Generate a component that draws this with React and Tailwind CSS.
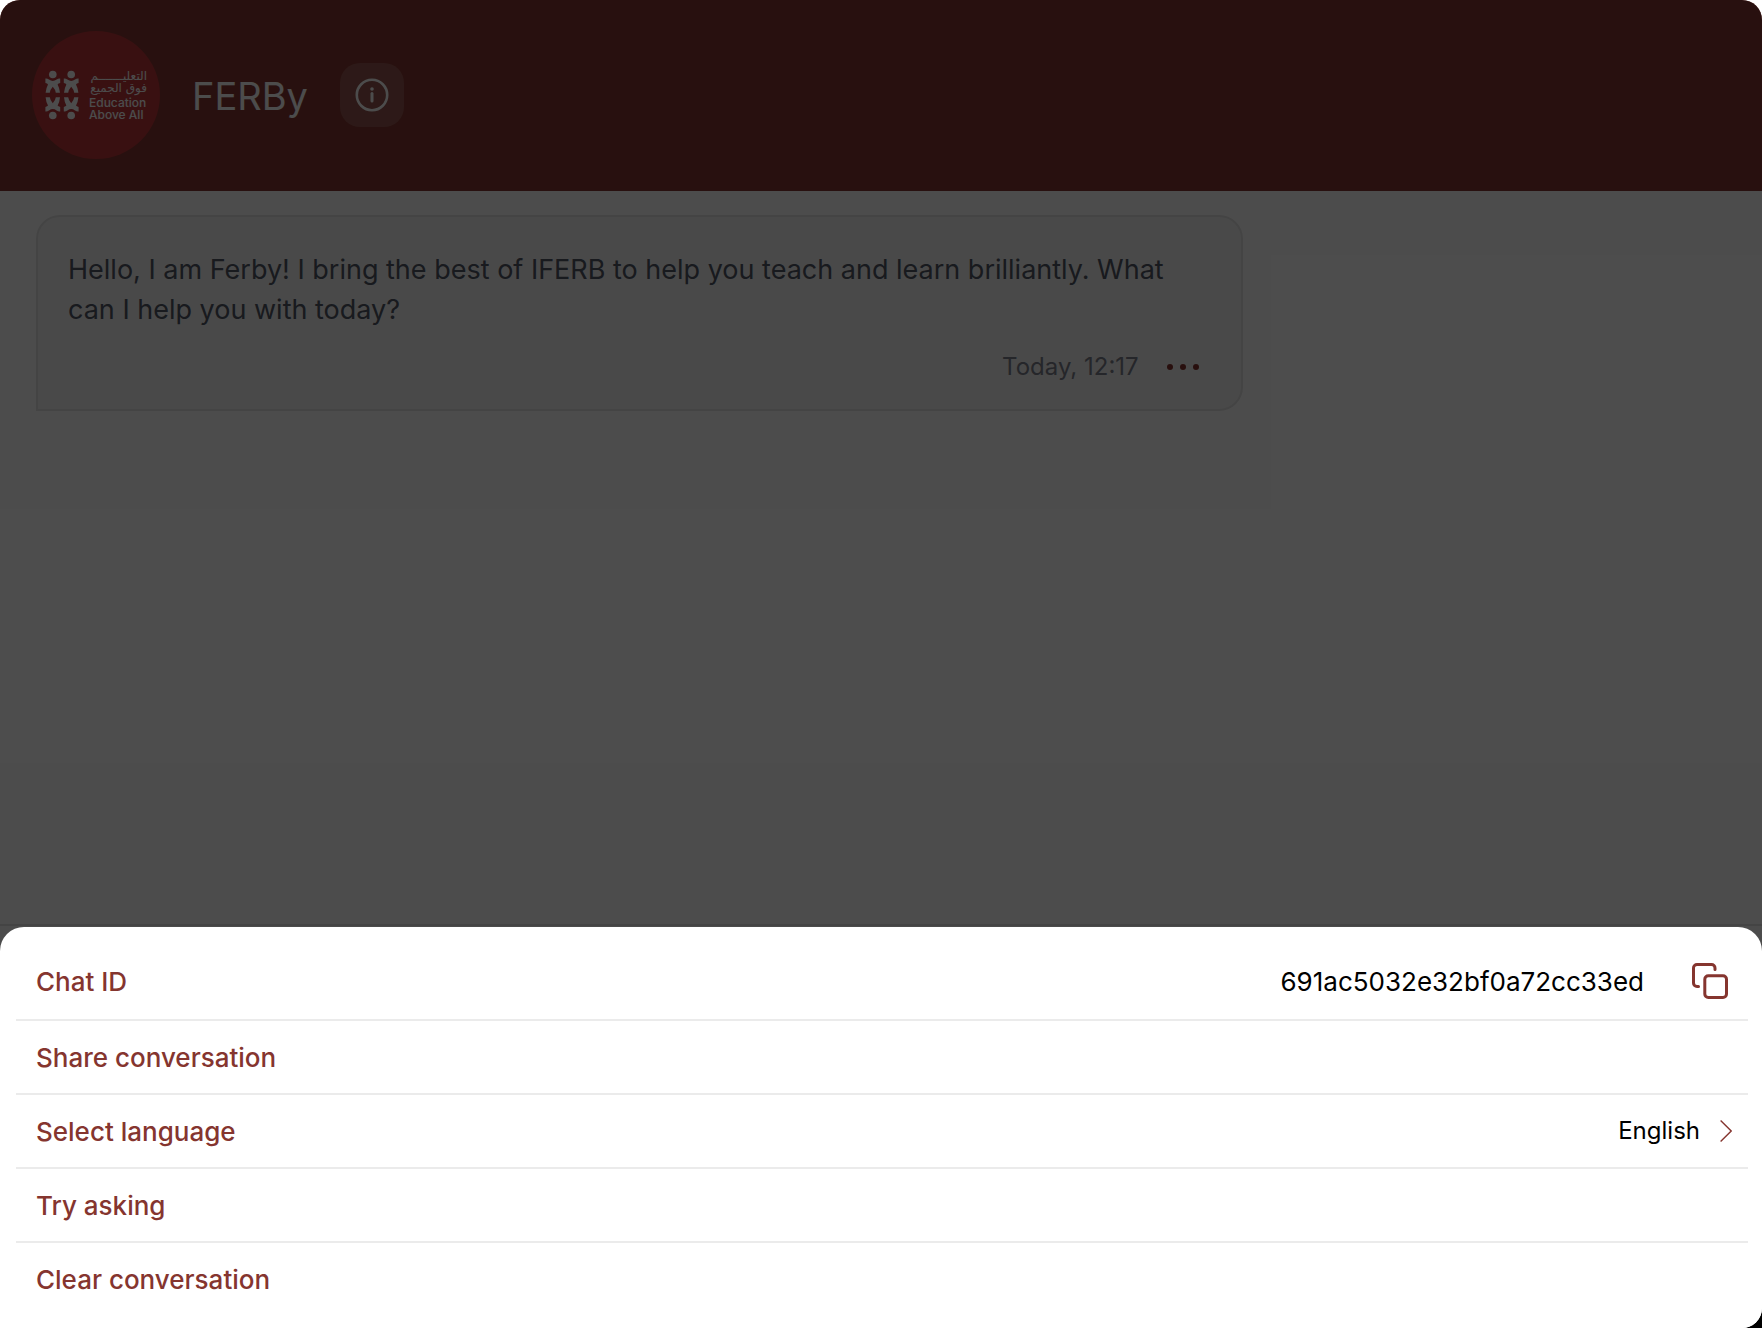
import { useState } from 'react';

const CHAT_ID = '691ac5032e32bf0a72cc33ed';

const Figure = ({ transform }) => (
    <g transform={transform}>
        <circle cx="0" cy="-20.5" r="3.8" />
        <path d="M-7.4-16.4 Q-5.5-16.6-3.8-15.4 Q0-12.8 3.8-15.4 Q5.5-16.6 7.4-16.4 V-11.9 Q5.4-11.6 4.8-10.6 Q6.8-7 7.2-2.2 H3 Q2.6-5.4 0-8.2 Q-2.6-5.4-3-2.2 H-7.2 Q-6.8-7-4.8-10.6 Q-5.4-11.6-7.4-11.9 Z" />
    </g>
);

const Logo = () => (
    <svg viewBox="0 0 128 128" className="size-32 shrink-0 rounded-full bg-[#be383b] fill-white" role="img" aria-label="Education Above All">
        <Figure transform="translate(20.8 64)" />
        <Figure transform="translate(39.2 64)" />
        <Figure transform="translate(20.8 64) scale(1 -1)" />
        <Figure transform="translate(39.2 64) scale(1 -1)" />
        <text x="115" y="49" textAnchor="end" fontSize="12" fontFamily="DejaVu Sans, sans-serif">التعليـــــــم</text>
        <text x="115" y="61" textAnchor="end" fontSize="12" fontFamily="DejaVu Sans, sans-serif">فوق الجميع</text>
        <text x="57" y="76" fontSize="12" fontWeight="500" fontFamily="Inter, sans-serif">Education</text>
        <text x="57" y="88" fontSize="12" fontWeight="500" fontFamily="Inter, sans-serif">Above All</text>
    </svg>
);

const InfoIcon = () => (
    <svg viewBox="0 0 34 34" className="size-[34px]" fill="none" stroke="currentColor" strokeWidth="2.6" strokeLinecap="round">
        <circle cx="17" cy="17" r="15.2" />
        <path d="M17 15.5v7.5" strokeWidth="3" />
        <circle cx="17" cy="11" r="1.8" fill="currentColor" stroke="none" />
    </svg>
);

const CopyIcon = () => (
    <svg viewBox="0 0 36 36" className="size-9" fill="none" stroke="currentColor" strokeWidth="3" strokeLinecap="round" strokeLinejoin="round">
        <rect x="12.8" y="12.8" width="21.7" height="21.7" rx="3.5" />
        <path d="M6.5 23.5H5A3.5 3.5 0 0 1 1.5 20V5A3.5 3.5 0 0 1 5 1.5H19.5A3.5 3.5 0 0 1 23 5V6.5" />
    </svg>
);

const ChevronIcon = () => (
    <svg viewBox="0 0 12 22" className="h-[22px] w-3" fill="none" stroke="#85352f" strokeWidth="1.4">
        <path d="M0.6 0.6 L11.2 11 L0.6 21.4" />
    </svg>
);

const MenuRow = ({ label, children, onClick }) => (
    <li className="border-b-2 border-[#ebebeb] last:border-b-0">
        <button type="button" onClick={onClick} className="flex h-[72px] w-full items-center justify-between pr-4 pl-5 text-left">
            <span className="text-[26px] font-medium text-[#85352f]">{label}</span>
            {children}
        </button>
    </li>
);

const App = () => {
    const [open, setOpen] = useState(true);

    const copyId = () => {
        navigator.clipboard?.writeText(CHAT_ID);
    };

    return (
        <div className="bg-[linear-gradient(135deg,#fff_90%,#000_98%)] font-[Inter,sans-serif]">
            <div className="relative flex min-h-screen flex-col overflow-hidden rounded-[20px]">
                <header className="flex items-center gap-8 bg-[#853832] px-8 pt-[31px] pb-8 text-white">
                    <Logo />
                    <h1 className="pt-0.5 text-[38px] leading-12">FERBy</h1>
                    <button type="button" aria-label="Info" onClick={() => setOpen(true)} className="flex size-16 items-center justify-center rounded-[20px] bg-white/15">
                        <InfoIcon />
                    </button>
                </header>

                <main className="flex-1 bg-white px-9 py-6">
                    <div className="w-[71.4%] rounded-3xl rounded-bl-none border-2 border-[#e4e4e4] bg-[#f5f5f5] px-[30px] pt-[33px] pb-[22px]">
                        <p className="text-[27px] leading-10 text-[#535766]">
                            Hello, I am Ferby! I bring the best of IFERB to help you teach and learn brilliantly. What can I help you with today?
                        </p>
                        <div className="mt-[17px] flex items-center justify-end gap-7 pr-3">
                            <time className="text-2xl leading-10 text-[#7d808c]">Today, 12:17</time>
                            <button type="button" aria-label="Message options" className="flex gap-[7px]">
                                <span className="size-1.5 rounded-full bg-[#85352f]" />
                                <span className="size-1.5 rounded-full bg-[#85352f]" />
                                <span className="size-1.5 rounded-full bg-[#85352f]" />
                            </button>
                        </div>
                    </div>
                </main>

                <footer className="h-[404px] border-t-2 border-[#e4e4e4] bg-white" />

                {open && (
                    <>
                        <div className="absolute inset-x-0 top-0 bottom-8 bg-black/70" onClick={() => setOpen(false)} />
                        <ul className="absolute inset-x-0 bottom-0 rounded-t-3xl bg-white pt-5 pr-[14px] pb-[13px] pl-4">
                            <li className="flex h-[74px] items-center justify-between border-b-2 border-[#ebebeb] pr-5 pb-1 pl-5">
                                <span className="text-[26px] font-medium text-[#85352f]">Chat ID</span>
                                <div className="flex items-center gap-12">
                                    <span className="text-[26px] text-black">{CHAT_ID}</span>
                                    <button type="button" aria-label="Copy chat ID" onClick={copyId} className="text-[#85352f]">
                                        <CopyIcon />
                                    </button>
                                </div>
                            </li>
                            <MenuRow label="Share conversation" />
                            <MenuRow label="Select language">
                                <span className="flex items-center gap-5 text-2xl text-black">
                                    English
                                    <ChevronIcon />
                                </span>
                            </MenuRow>
                            <MenuRow label="Try asking" />
                            <MenuRow label="Clear conversation" />
                        </ul>
                    </>
                )}
            </div>
        </div>
    );
};

export default App;
